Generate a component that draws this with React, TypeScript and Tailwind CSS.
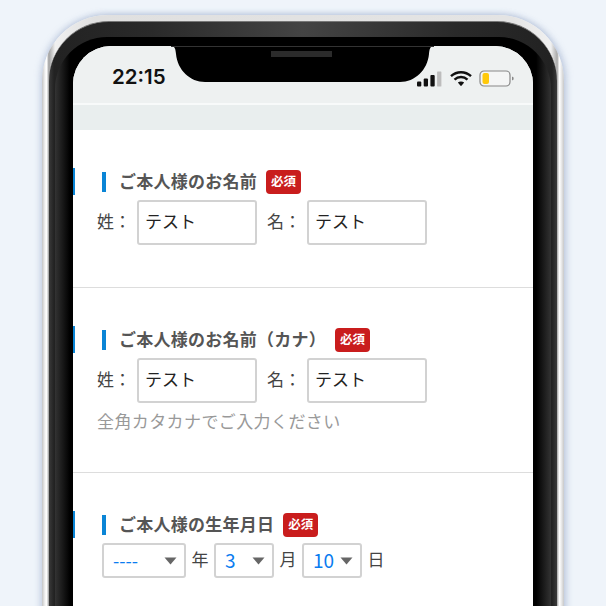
const jp = "font-['Noto_Sans_CJK_JP','Noto_Sans',sans-serif]";

function Required() {
  return (
    <span className="ml-[9px] flex h-[24px] w-[35px] items-center justify-center rounded-[4px] bg-[#c91d1d] pb-[1px] text-[12.500px] font-bold text-white">
      必須
    </span>
  );
}

function Title({ children }: { children: React.ReactNode }) {
  return (
    <div className="flex h-[27px] items-center border-l-[2px] border-[#0a85d6] pl-[27px]">
      <span className="flex h-[20px] items-center border-l-[4px] border-[#0a85d6] pb-[2px] pl-[13px] text-[17px] font-bold leading-none tracking-[0.25px] text-[#555]">
        {children}
      </span>
      <Required />
    </div>
  );
}

function TextBox() {
  return (
    <div className="flex h-[45px] w-[120px] items-center rounded-[3px] border-2 border-[#d2d2d2] bg-white pb-[3px] pl-[6px] text-[17px] text-[#222]">
      テスト
    </div>
  );
}

function NameRow() {
  return (
    <div className="flex items-center pl-[24px] text-[17px] text-[#444]">
      <span className="w-[40px] pb-[4px]">姓：</span>
      <TextBox />
      <span className="ml-[10px] w-[40px] pb-[4px]">名：</span>
      <TextBox />
    </div>
  );
}

function Select({ value, width, numberClass }: { value: string; width: string; numberClass: string }) {
  return (
    <div className={`${width} flex h-[35px] items-center justify-between rounded-[3px] border-2 border-[#d2d2d2] bg-white pr-[7px] text-[#0a7cf0] ${numberClass}`}>
      <span className="pb-[2px] leading-none">{value}</span>
      <svg width="13" height="8" viewBox="0 0 13 8" className="shrink-0">
        <path d="M0.5 0.5h12L6.5 7.5z" fill="#666" />
      </svg>
    </div>
  );
}

function DateUnit({ children }: { children: React.ReactNode }) {
  return <span className="w-[28px] pb-[3px] text-center">{children}</span>;
}

function StatusIcons() {
  return (
    <div className="flex items-center">
      <svg width="25" height="16" viewBox="0 0 25 16">
        <rect x="0" y="10.500" width="4.300" height="5" rx="1" fill="#111" />
        <rect x="6.700" y="7.500" width="4.300" height="8" rx="1" fill="#111" />
        <rect x="13.400" y="4" width="4.300" height="11.500" rx="1" fill="#111" />
        <rect x="20.100" y="0.500" width="4.300" height="15" rx="0.500" fill="#bdbdbd" />
      </svg>
      <svg width="22" height="16" viewBox="0 0 22 16" className="ml-[8px]">
        <path d="M1 5.200C6.600 0 15.400 0 21 5.200" fill="none" stroke="#111" strokeWidth="2.400" />
        <path d="M4.500 8.600C8.200 5.200 13.800 5.200 17.500 8.600" fill="none" stroke="#111" strokeWidth="2.400" />
        <path d="M7.800 11.600C9.700 10.200 12.300 10.200 14.200 11.600L11 15.200z" fill="#111" />
      </svg>
      <svg width="35" height="17" viewBox="0 0 35 17" className="ml-[7px]">
        <rect x="1" y="1" width="30" height="15" rx="4" fill="#f4f5f5" stroke="#888" strokeWidth="1.200" />
        <rect x="3.500" y="3" width="6.500" height="11" rx="2" fill="#ffc90a" />
        <path d="M33 6.500l1.600 1v2l-1.600 1z" fill="#888" />
      </svg>
    </div>
  );
}

function Notch() {
  return (
    <svg width="263" height="37" viewBox="0 0 263 37" className="absolute left-[98px] top-0">
      <path d="M0 0H263C259 0 258.500 3 258 8C256.500 24 244 36 229 36H34C19 36 6.500 24 5 8C4.500 3 4 0 0 0Z" fill="#000" />
      <path d="M0 0.500H263" stroke="#333" strokeWidth="1" />
      <rect x="100" y="5" width="61" height="6" fill="#2b2b2b" />
    </svg>
  );
}

export default function App() {
  return (
    <div className={`${jp} h-[606px] overflow-hidden bg-[#eff4fa] pl-[42px] pt-[15px]`}>
      <div className="h-[700px] w-[522px] rounded-t-[66px] bg-[linear-gradient(90deg,#c4c4c4_0%,#f4f4f4_0.600%,#fff_0.900%,#a0a0a0_1.300%,#f0f0f0_2.500%,#e0e0e0_10%,#e4e4e4_90%,#f0f0f0_97.500%,#a8a8a8_98.700%,#fff_99.100%,#f0f0f0_99.400%,#c8c8c8_100%)] px-[7px] pt-[6px] shadow-[-2px_-1px_6px_rgba(130,150,190,0.35),3px_0_6px_rgba(130,150,190,0.35)]">
        <div className="h-full rounded-t-[60px] border-t border-[#777] bg-[linear-gradient(90deg,#3a3a3a_0%,#222_1%,#2a2a2a_20%,#444_50%,#2a2a2a_80%,#222_99%,#3a3a3a_100%)] px-[6px] pt-[15px]">
          <div className="h-full rounded-t-[52px] bg-[linear-gradient(90deg,#333_0%,#000_3%,#000_97%,#333_100%)] px-[18px] pt-[9px]">
            <div className="relative h-full overflow-hidden rounded-t-[38px] bg-white">
              <Notch />
              <div className="flex h-[59px] items-end justify-between border-b-[2px] border-[#f8fafa] bg-[#eef1f1] pb-[16px] pl-[39px] pr-[19px]">
                <span className="font-['Inter'] text-[20.500px] font-semibold leading-none text-[#111]">22:15</span>
                <StatusIcons />
              </div>
              <div className="h-[25px] bg-[#e9eeee]" />

              <section className="h-[158px] border-b border-[#ddd] pt-[38px]">
                <Title>ご本人様のお名前</Title>
                <div className="mt-[5px]">
                  <NameRow />
                </div>
              </section>

              <section className="h-[185px] border-b border-[#ddd] pt-[38px]">
                <Title>ご本人様のお名前（カナ）</Title>
                <div className="mt-[5px]">
                  <NameRow />
                </div>
                <p className="mt-[6px] pl-[24px] text-[17px] leading-[24px] tracking-[0.4px] text-[#999]">
                  全角カタカナでご入力ください
                </p>
              </section>

              <section className="pt-[38px]">
                <Title>ご本人様の生年月日</Title>
                <div className="mt-[5px] flex items-center pl-[29px] text-[17px] text-[#444]">
                  <Select value="----" width="w-[84px]" numberClass="pl-[9px] text-[18px]" />
                  <DateUnit>年</DateUnit>
                  <Select value="3" width="w-[60px]" numberClass="pl-[9px] text-[19px]" />
                  <DateUnit>月</DateUnit>
                  <Select value="10" width="w-[60px]" numberClass="pl-[9px] text-[19px]" />
                  <DateUnit>日</DateUnit>
                </div>
              </section>
            </div>
          </div>
        </div>
      </div>
    </div>
  );
}
